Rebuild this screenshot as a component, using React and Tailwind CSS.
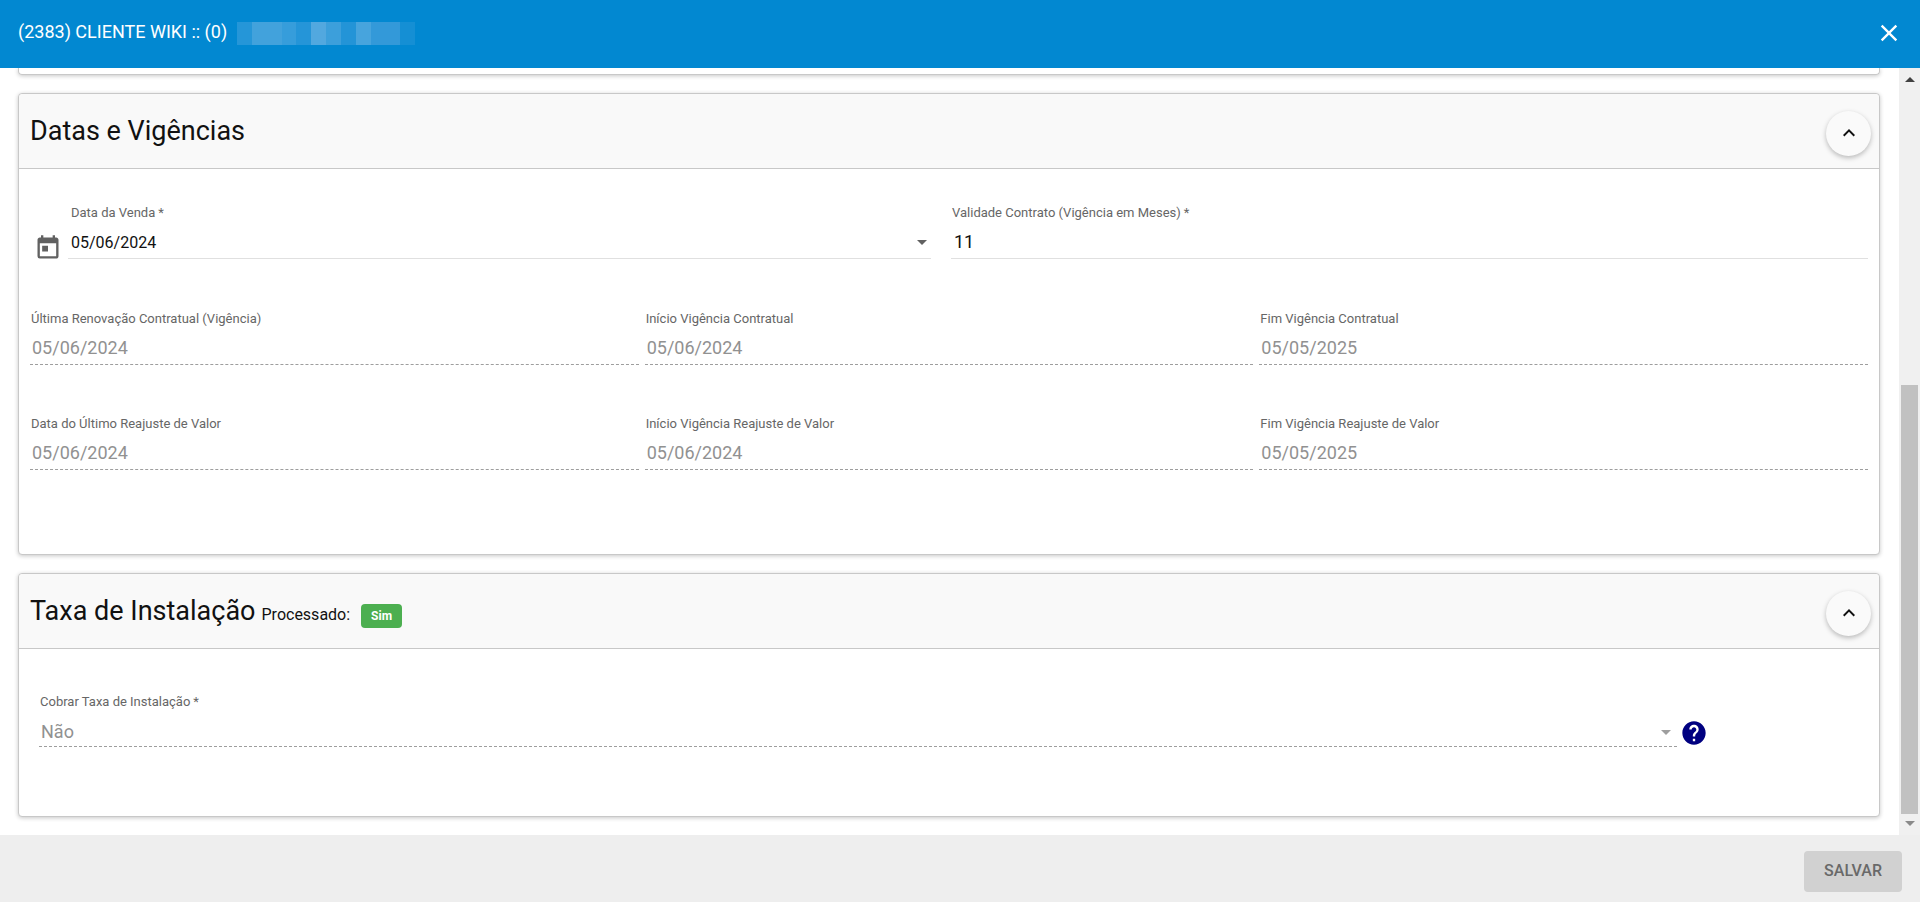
import { useState } from 'react';
import { MdClose, MdExpandLess, MdHelp, MdToday } from 'react-icons/md';

const Caret = ({ className }) => (
  <svg viewBox="0 0 10 5" className={`w-[10px] h-[5px] pointer-events-none ${className}`} aria-hidden="true">
    <path d="M0 0h10L5 5z" fill="currentColor" />
  </svg>
);

const Card = ({ title, extra, children }) => {
  const [open, setOpen] = useState(true);

  return (
    <section className="mb-[18px] rounded border border-[#c8c8c8] bg-white shadow-[0_1px_4px_rgba(0,0,0,0.22)]">
      <header className="flex h-[75px] items-center justify-between rounded-t border-b border-[#c8c8c8] bg-[#f9f9f9] pl-[11px] pr-2">
        <div className="flex items-baseline">
          <h2 className="text-[27px] leading-[30px]">{title}</h2>
          {extra}
        </div>
        <button
          type="button"
          aria-label={title}
          onClick={() => setOpen(!open)}
          className="mt-1 flex h-[45px] w-[45px] items-center justify-center rounded-full bg-[#fafafa] shadow-[0_2px_5px_rgba(0,0,0,0.26)]"
        >
          <MdExpandLess size={24} />
        </button>
      </header>
      {open && children}
    </section>
  );
};

const Label = ({ id, required, children }) => (
  <label htmlFor={id} className="pl-px text-[13px] leading-[18px] text-[#666]">
    {children}
    {required && <span className="ml-[3px]">*</span>}
  </label>
);

const Field = ({ id, label, value, required, disabled }) => (
  <div className="flex min-w-0 flex-col">
    <Label id={id} required={required}>{label}</Label>
    <input
      id={id}
      type="text"
      defaultValue={value}
      disabled={disabled}
      className={
        disabled
          ? 'mt-1 h-[33px] w-full border-b border-dashed border-[#9e9e9e] bg-transparent pl-[2px] pb-px text-lg text-[#919191]'
          : 'mt-1 h-[33px] w-full border-b border-[#e0e0e0] bg-transparent pl-[3px] pb-px text-lg'
      }
    />
  </div>
);

const renovacao = [
  { id: 'ultima-renovacao', label: 'Última Renovação Contratual (Vigência)', value: '05/06/2024' },
  { id: 'inicio-vigencia', label: 'Início Vigência Contratual', value: '05/06/2024' },
  { id: 'fim-vigencia', label: 'Fim Vigência Contratual', value: '05/05/2025' },
];

const reajuste = [
  { id: 'ultimo-reajuste', label: 'Data do Último Reajuste de Valor', value: '05/06/2024' },
  { id: 'inicio-reajuste', label: 'Início Vigência Reajuste de Valor', value: '05/06/2024' },
  { id: 'fim-reajuste', label: 'Fim Vigência Reajuste de Valor', value: '05/05/2025' },
];

const App = () => {
  return (
    <div className="flex h-screen flex-col bg-white font-[Roboto,sans-serif] text-[#111]">
      <header className="flex h-[68px] shrink-0 items-center justify-between bg-[#0288d1] pl-[18px] pr-[17px] pb-[2px] text-white">
        <div className="flex items-center pb-[2px]">
          <h1 className="text-lg">(2383) CLIENTE WIKI :: (0)</h1>
          <div className="ml-[10px] mt-[2px] flex h-[23px]" aria-hidden="true">
            <span className="w-[15px] bg-[#2596d8]" />
            <span className="w-[30px] bg-[#42a2dc]" />
            <span className="w-[14px] bg-[#369ddb]" />
            <span className="w-[15px] bg-[#2595d8]" />
            <span className="w-[15px] bg-[#52a8df]" />
            <span className="w-[15px] bg-[#3c9fdb]" />
            <span className="w-[15px] bg-[#2394d7]" />
            <span className="w-[15px] bg-[#47a4dd]" />
            <span className="w-[29px] bg-[#3399d9]" />
            <span className="w-[15px] bg-[#158fd4]" />
          </div>
        </div>
        <button type="button" aria-label="Fechar">
          <MdClose size={28} />
        </button>
      </header>

      <div className="flex min-h-0 flex-1">
        <main className="min-w-0 flex-1 overflow-hidden pl-[18px] pr-[19px]">
          <div className="mb-[18px] h-[7px] rounded-b border border-t-0 border-[#c8c8c8] shadow-[0_1px_4px_rgba(0,0,0,0.22)]" />

          <Card title="Datas e Vigências">
            <div className="px-[11px] pt-[35px] pb-[84px]">
              <div className="grid grid-cols-2 gap-1">
                <div className="flex items-end pr-4">
                  <MdToday size={28} className="ml-1 -mb-[3px] shrink-0 text-[#616161]" />
                  <div className="relative ml-[6px] flex min-w-0 flex-1 flex-col">
                    <div className="flex pl-[2px]">
                      <Label id="data-venda" required>Data da Venda</Label>
                    </div>
                    <input
                      id="data-venda"
                      type="text"
                      defaultValue="05/06/2024"
                      className="mt-1 h-[33px] w-full border-b border-[#e0e0e0] pl-[3px] text-base"
                    />
                    <Caret className="absolute right-1 bottom-[14px] text-[#616161]" />
                  </div>
                </div>
                <Field id="validade" label="Validade Contrato (Vigência em Meses)" value="11" required />
              </div>

              <div className="mt-[51px] grid grid-cols-3 gap-[6px]">
                {renovacao.map((f) => (
                  <Field key={f.id} {...f} disabled />
                ))}
              </div>
              <div className="mt-[50px] grid grid-cols-3 gap-[6px]">
                {reajuste.map((f) => (
                  <Field key={f.id} {...f} disabled />
                ))}
              </div>
            </div>
          </Card>

          <Card
            title="Taxa de Instalação"
            extra={
              <>
                <span className="ml-[6px] text-base">Processado:</span>
                <span className="ml-[11px] mt-2 -mb-1 self-start rounded bg-[#4caf50] px-[10px] text-xs font-bold leading-6 text-white">
                  Sim
                </span>
              </>
            }
          >
            <div className="flex items-end px-5 pt-11 pb-[69px]">
              <div className="relative flex w-[90%] flex-col">
                <Label id="cobrar-taxa" required>Cobrar Taxa de Instalação</Label>
                <select
                  id="cobrar-taxa"
                  disabled
                  defaultValue="nao"
                  className="mt-1 h-8 w-full appearance-none border-b border-dashed border-[#9e9e9e] bg-transparent pl-[2px] pt-[2px] text-lg text-[#919191] opacity-100"
                >
                  <option value="nao">Não</option>
                  <option value="sim">Sim</option>
                </select>
                <Caret className="absolute right-[6px] bottom-3 text-[#9e9e9e]" />
              </div>
              <button type="button" aria-label="Ajuda" className="ml-[3px] text-[#000080]">
                <MdHelp size={28} />
              </button>
            </div>
          </Card>
        </main>

        <div className="flex w-[21px] flex-col items-center justify-between bg-[#f0f0f0]" aria-hidden="true">
          <Caret className="mt-[9px] rotate-180 text-[#404040]" />
          <div className="mt-auto h-[429px] w-[17px] bg-[#c1c1c1]" />
          <Caret className="mt-[7px] mb-[9px] text-[#8a8a8a]" />
        </div>
      </div>

      <footer className="flex h-[67px] shrink-0 items-center justify-end bg-[#eee] pr-[18px]">
        <button
          type="button"
          disabled
          className="mt-[5px] h-[41px] rounded bg-[#d1d1d1] px-5 text-base font-medium text-[#696969]"
        >
          SALVAR
        </button>
      </footer>
    </div>
  );
};

export default App;
